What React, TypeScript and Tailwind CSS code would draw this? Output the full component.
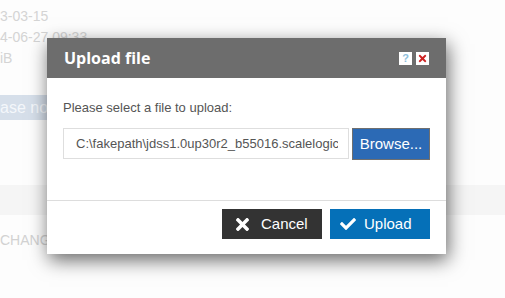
import { FaCheck, FaTimes } from 'react-icons/fa'

const bgLines = ['3-03-15', '4-06-27 09:33', 'iB']

function Background() {
  return (
    <div className="flex h-[298px] flex-col bg-[#fdfdfd] font-['Liberation_Sans',Arial,sans-serif] text-[14px] text-[#d4d4d4]">
      <div className="pt-[6px]">
        {bgLines.map(line => (
          <div key={line} className="h-[21px] leading-[21px]">
            {line}
          </div>
        ))}
      </div>
      <div className="mt-[26px] flex h-[25px] w-[60px] items-center overflow-hidden whitespace-nowrap bg-[#d6dfea] text-[16px] text-[#f4f7fb]">
        ase note
      </div>
      <div className="mt-[65px] h-[30px] w-full bg-[#f5f5f5]" />
      <div className="mt-[17px] whitespace-nowrap text-[14px] leading-[16px] text-[#d2d2d2]">
        CHANGELOG
      </div>
    </div>
  )
}

function UploadDialog() {
  return (
    <div className="absolute left-[47px] top-[38px] flex w-[399px] flex-col bg-white font-['Liberation_Sans',Arial,sans-serif] shadow-[2px_6px_18px_rgba(0,0,0,0.6)]">
      <div className="flex h-[40px] items-center justify-between bg-[#6d6d6d] px-[17px]">
        <span className="font-['Open_Sans',sans-serif] text-[16px] font-bold text-white">
          Upload file
        </span>
        <div className="flex gap-[4px]">
          <span className="flex h-[13px] w-[13px] items-center justify-center bg-white text-[11px] font-bold leading-none text-[#8ec0dc]">
            ?
          </span>
          <span className="flex h-[13px] w-[13px] items-center justify-center bg-white">
            <FaTimes className="h-[11px] w-[11px] text-[#cc2222]" />
          </span>
        </div>
      </div>
      <div className="px-[16px] pb-[40px] pt-[22px]">
        <div className="h-[16px] text-[13px] leading-[16px] text-[#555]">
          Please select a file to upload:
        </div>
        <div className="mt-[12px] flex gap-[3px]">
          <div className="flex h-[31px] w-[286px] items-center border border-[#dedede] pl-[12px] pr-[10px] text-[13px] text-[#555]">
            <div className="overflow-hidden whitespace-nowrap">
              C:\fakepath\jdss1.0up30r2_b55016.scalelogic
            </div>
          </div>
          <button className="h-[32px] w-[79px] border border-[#6f6f6f] bg-[#2c6ab5] text-[15px] text-white">
            Browse...
          </button>
        </div>
      </div>
      <div className="flex justify-end gap-[8px] border-t border-[#dddddd] pb-[15px] pr-[16px] pt-[8px]">
        <button className="flex h-[30px] w-[100px] items-center gap-[9px] bg-[#333333] pl-[11px] text-[15px] text-white">
          <FaTimes className="h-[19px] w-[19px]" />
          Cancel
        </button>
        <button className="flex h-[30px] w-[100px] items-center gap-[8px] bg-[#0570b8] pl-[10px] text-[15px] text-white">
          <FaCheck className="h-[16px] w-[16px]" />
          Upload
        </button>
      </div>
    </div>
  )
}

export default function App() {
  return (
    <div className="relative h-[298px] w-[505px] overflow-hidden">
      <Background />
      <UploadDialog />
    </div>
  )
}
